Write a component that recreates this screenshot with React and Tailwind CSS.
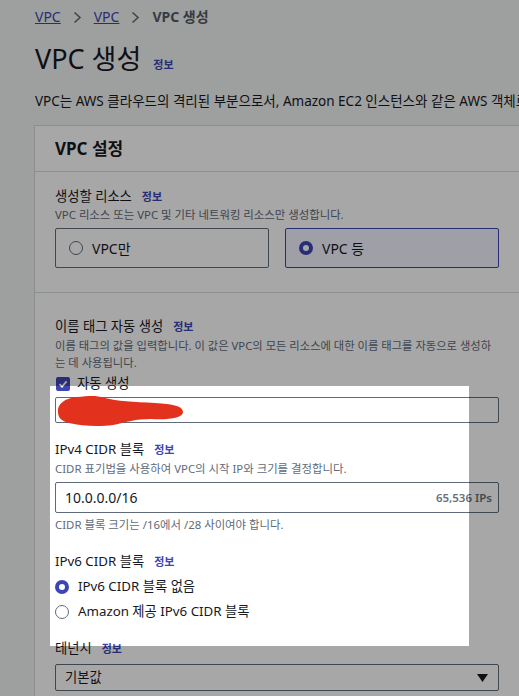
import React from "react";

const FONT = { fontFamily: '"Noto Sans", "Noto Sans CJK KR", sans-serif' };

function Info({ className = "" }) {
  return (
    <span className={"text-[11px] font-bold text-[#3d45b5] " + className}>정보</span>
  );
}

function Chevron() {
  return (
    <svg width="9" height="13" viewBox="0 0 9 13" className="mx-[12px]">
      <path d="M1.5 1.5 L7 6.5 L1.5 11.5" fill="none" stroke="#5f6b7a" strokeWidth="1.6" />
    </svg>
  );
}

function Radio({ checked }) {
  return checked ? (
    <span className="inline-block w-[14px] h-[14px] rounded-full border-[4px] border-[#3d45b5] bg-white shrink-0" />
  ) : (
    <span className="inline-block w-[14px] h-[14px] rounded-full border-[1.5px] border-[#5f6b7a] bg-white shrink-0" />
  );
}

function Label({ children, className = "" }) {
  return (
    <div className={"flex items-center h-[20px] text-[13.3px] " + className}>
      <span>{children}</span>
      <Info className="ml-[10px]" />
    </div>
  );
}

export default function App() {
  return (
    <div style={FONT} className="relative w-[519px] h-[696px] overflow-hidden bg-[#f2f3f3] text-[#16191f]">
      <div className="pl-[34px] w-[580px]">
        {/* breadcrumb */}
        <div className="flex items-center pt-[7px] h-[27px] text-[14px] leading-[20px]">
          <span className="text-[#3d45b5] underline pl-[1px]">VPC</span>
          <Chevron />
          <span className="text-[#3d45b5] underline">VPC</span>
          <Chevron />
          <span className="font-bold text-[#545b64]">VPC 생성</span>
        </div>
        {/* heading */}
        <div className="flex items-baseline mt-[14px] h-[36px]">
          <h1 className="text-[27px] leading-[36px] font-normal pl-[1px]">VPC 생성</h1>
          <Info className="ml-[12px]" />
        </div>
        <p className="mt-[14px] text-[13.5px] leading-[20px] whitespace-nowrap pl-[1px]">
          VPC는 AWS 클라우드의 격리된 부분으로서, Amazon EC2 인스턴스와 같은 AWS 객체로 채워집니다.
        </p>
        {/* panel */}
        <div className="mt-[14px] w-[486px] border border-[#d5dbdb] bg-white">
          <div className="h-[46px] flex items-center px-[20px] border-b border-[#d5dbdb]">
            <h2 className="text-[17px] font-bold leading-[24px]">VPC 설정</h2>
          </div>
          {/* resources */}
          <div className="px-[20px] pt-[15px] pb-[24px] border-b border-[#d5dbdb]">
            <Label>생성할 리소스</Label>
            <p className="text-[11.4px] leading-[16px] text-[#5f6b7a]">
              VPC 리소스 또는 VPC 및 기타 네트워킹 리소스만 생성합니다.
            </p>
            <div className="grid grid-cols-2 gap-[16px] mt-[5px]">
              <div className="h-[40px] border border-[#5f6b7a] rounded-[2px] flex items-center pl-[13px] gap-[9px] text-[14px]">
                <Radio />
                <span>VPC만</span>
              </div>
              <div className="h-[40px] border border-[#3d45b5] bg-[#f3f5ff] rounded-[2px] flex items-center pl-[13px] gap-[9px] text-[14px]">
                <Radio checked />
                <span>VPC 등</span>
              </div>
            </div>
          </div>
          {/* name tag */}
          <div className="px-[20px] pt-[24px]">
            <Label>이름 태그 자동 생성</Label>
            <p className="text-[11.3px] leading-[17px] text-[#5f6b7a]">
              이름 태그의 값을 입력합니다. 이 값은 VPC의 모든 리소스에 대한 이름 태그를 자동으로 생성하는 데 사용됩니다.
            </p>
            <div className="flex items-center h-[20px] mt-[3px] text-[13.3px]">
              <span className="w-[14px] h-[14px] ml-[1px] rounded-[2px] bg-[#3d45b5] flex items-center justify-center">
                <svg width="10" height="10" viewBox="0 0 10 10">
                  <path d="M1.5 5.2 L4 7.6 L8.6 2.4" fill="none" stroke="white" strokeWidth="1.8" />
                </svg>
              </span>
              <span className="ml-[7px]">자동 생성</span>
            </div>
            <div className="mt-[3px] h-[26px] border border-[#5f6b7a] rounded-[2px]" />

            {/* IPv4 */}
            <Label className="mt-[17px]">IPv4 CIDR 블록</Label>
            <p className="text-[11.4px] leading-[16px] text-[#5f6b7a] mt-[1px]">
              CIDR 표기법을 사용하여 VPC의 시작 IP와 크기를 결정합니다.
            </p>
            <div className="mt-[5px] h-[31px] border border-[#5f6b7a] rounded-[2px] flex items-center justify-between pl-[9px] pr-[6px]">
              <span className="text-[14px]">10.0.0.0/16</span>
              <span className="text-[11.5px] font-semibold text-[#687078]">65,536 IPs</span>
            </div>
            <p className="text-[11.4px] leading-[16px] text-[#5f6b7a] mt-[4px]">
              CIDR 블록 크기는 /16에서 /28 사이여야 합니다.
            </p>

            {/* IPv6 */}
            <Label className="mt-[19px]">IPv6 CIDR 블록</Label>
            <div className="flex items-center h-[20px] mt-[5px] gap-[9px] text-[13.3px]">
              <Radio checked />
              <span>IPv6 CIDR 블록 없음</span>
            </div>
            <div className="flex items-center h-[20px] mt-[5px] gap-[9px] text-[13.3px]">
              <Radio />
              <span>Amazon 제공 IPv6 CIDR 블록</span>
            </div>

            {/* tenancy */}
            <Label className="mt-[17px]">테넌시</Label>
            <div className="mt-[5px] h-[27px] border border-[#5f6b7a] rounded-[2px] flex items-center justify-between pl-[9px] pr-[10px] text-[13.3px]">
              <span>기본값</span>
              <svg width="11" height="8" viewBox="0 0 11 8">
                <path d="M0 0 H11 L5.5 8 Z" fill="#16191f" />
              </svg>
            </div>
            <div className="h-[40px]" />
          </div>
        </div>
      </div>

      {/* redaction scribble */}
      <svg className="absolute left-[55px] top-[392px]" width="132" height="36" viewBox="0 0 132 36">
        <path
          d="M3 20 C2 12 10 6 22 5 C34 4 40 3 50 6 C62 9 78 10 100 11 C118 12 128 14 128 20 C128 26 114 28 96 27 C80 27 72 30 58 33 C44 35 26 34 14 31 C6 29 3 25 3 20 Z"
          fill="#e2311d"
        />
      </svg>

      {/* highlight overlay */}
      <div className="absolute left-[50px] top-[386px] w-[419px] h-[260px] shadow-[0_0_0_2000px_rgba(0,0,0,0.345)] pointer-events-none" />
    </div>
  );
}
